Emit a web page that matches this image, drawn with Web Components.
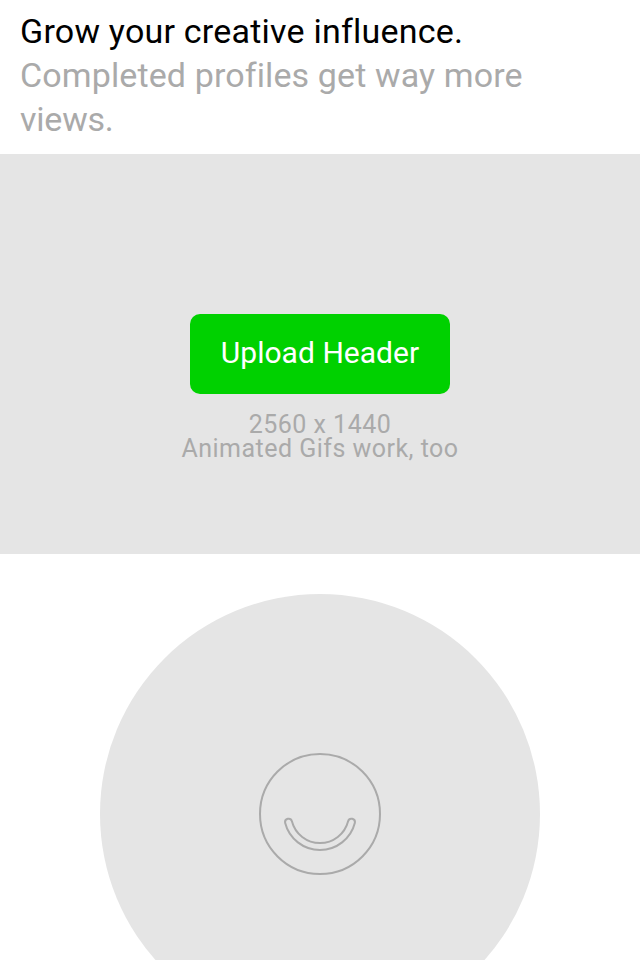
<!DOCTYPE html>
<html lang="en"><head><meta charset="utf-8"><title>Profile</title>
<style>body{margin:0;background:#fff;font-family:Roboto,"Liberation Sans",Arial,sans-serif;overflow:hidden}</style></head>
<body><profile-page></profile-page>
<script>
const define=(name,html)=>customElements.define(name,class extends HTMLElement{constructor(){super();this.attachShadow({mode:"open"}).innerHTML=html}});
define("text-line",`<style>:host{display:block;white-space:nowrap}</style><slot></slot>`);
define("profile-intro",`<style>:host{display:block;height:145px;padding:9px 20px 0;font-size:34px;line-height:44px;letter-spacing:.12px;color:#aaa}
.title{color:#000;letter-spacing:.22px}.last{letter-spacing:-.2px}</style>
<text-line class="title">Grow your creative influence.</text-line><text-line>Completed profiles get way more</text-line><text-line class="last">views.</text-line>`);
define("upload-button",`<style>:host{display:block}button{display:flex;align-items:center;justify-content:center;width:260px;height:80px;border:0;border-radius:10px;background:#00d100;color:#fff;font:30px/36px Roboto,"Liberation Sans",sans-serif;letter-spacing:.03px;padding:0 0 2px}</style><button><text-line><slot></slot></text-line></button>`);
define("header-uploader",`<style>:host{display:flex;flex-direction:column;align-items:center;box-sizing:border-box;height:400px;padding-top:160px;background:#e5e5e5;color:#aaa;font-size:25px;line-height:24px;letter-spacing:.48px}p{margin:19px 0 0;display:flex;flex-direction:column;align-items:center}</style>
<upload-button>Upload Header</upload-button><p><text-line>2560 x 1440</text-line><text-line>Animated Gifs work, too</text-line></p>`);
define("avatar-uploader",`<style>:host{display:flex;align-items:center;justify-content:center;width:440px;height:440px;border-radius:50%;background:#e5e5e5;margin:40px auto 0}svg{display:block}</style>
<svg width="124" height="124" viewBox="258 752 124 124" fill="none" stroke="#aaa" stroke-width="2"><circle cx="320" cy="814" r="60"/><path d="M285.1 822.8A36 36 0 0 0 354.9 822.8A3.5 3.5 0 0 0 348.1 821.2A29 29 0 0 1 291.9 821.2A3.5 3.5 0 0 0 285.1 822.8Z"/></svg>`);
define("profile-page",`<style>:host{display:block;height:960px;overflow:hidden}</style><profile-intro></profile-intro><header-uploader></header-uploader><avatar-uploader></avatar-uploader>`);
</script></body></html>
